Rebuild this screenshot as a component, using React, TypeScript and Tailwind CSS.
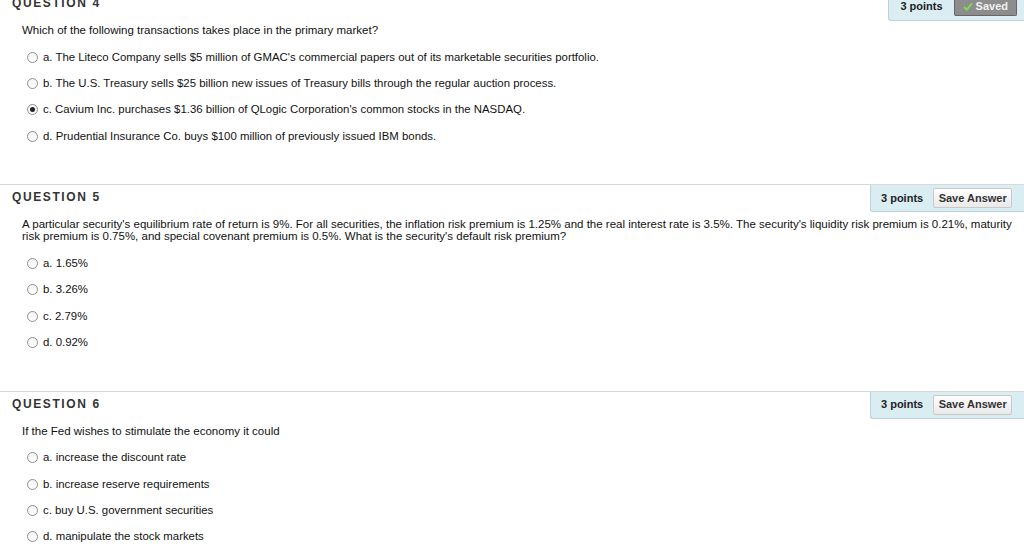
import type { ReactNode } from 'react'

type Question = {
  num: number
  text: ReactNode
  options: string[]
  selected?: number
  saved?: boolean
}

const QUESTIONS: Question[] = [
  {
    num: 4,
    text: 'Which of the following transactions takes place in the primary market?',
    options: [
      "a. The Liteco Company sells $5 million of GMAC's commercial papers out of its marketable securities portfolio.",
      'b. The U.S. Treasury sells $25 billion new issues of Treasury bills through the regular auction process.',
      "c. Cavium Inc. purchases $1.36 billion of QLogic Corporation's common stocks in the NASDAQ.",
      'd. Prudential Insurance Co. buys $100 million of previously issued IBM bonds.',
    ],
    selected: 2,
    saved: true,
  },
  {
    num: 5,
    text: (
      <>
        A particular security's equilibrium rate of return is 9%. For all securities, the inflation risk premium is 1.25% and the real interest rate is 3.5%. The security's liquidity risk premium is 0.21%, maturity
        <br />
        risk premium is 0.75%, and special covenant premium is 0.5%. What is the security's default risk premium?
      </>
    ),
    options: ['a. 1.65%', 'b. 3.26%', 'c. 2.79%', 'd. 0.92%'],
  },
  {
    num: 6,
    text: 'If the Fed wishes to stimulate the economy it could',
    options: [
      'a. increase the discount rate',
      'b. increase reserve requirements',
      'c. buy U.S. government securities',
      'd. manipulate the stock markets',
    ],
  },
]

function Radio({ checked }: { checked?: boolean }) {
  return (
    <span className="flex h-[11px] w-[11px] shrink-0 items-center justify-center rounded-full border border-[#8f8f8f] bg-gradient-to-b from-[#f4f4f4] to-white">
      {checked && <span className="h-[5px] w-[5px] rounded-full bg-[#222]" />}
    </span>
  )
}

function PointsBox({ saved }: { saved?: boolean }) {
  if (saved) {
    return (
      <div className="flex h-[30px] items-start gap-[11px] rounded-bl-[3px] border-b border-l border-[#b9d3dc] bg-[#d9edf3] pl-[11px] pr-[7px]">
        <span className="pt-[9px] text-[11px] font-bold leading-[13px] text-[#222]">3 points</span>
        <span className="flex h-[25px] items-end gap-[3px] rounded-b-[2px] border border-t-0 border-[#666] bg-[#8d8d8d] px-[8px] pb-[2px] text-[11px] font-bold leading-[13px] text-[#f0f0f0]">
          <svg width="10" height="9" viewBox="0 0 10 9" className="mb-[2px]">
            <path d="M1 5 L3.8 7.6 L9 1.4" fill="none" stroke="#7ed957" strokeWidth="2" />
          </svg>
          Saved
        </span>
      </div>
    )
  }
  return (
    <div className="flex h-[27px] w-[154px] items-center gap-[10px] rounded-bl-[3px] border-b border-l border-[#b9d3dc] bg-[#d9edf3] pl-[10px] pr-[11px]">
      <span className="text-[11px] font-bold text-[#222]">3 points</span>
      <button
        type="button"
        className="h-[20px] w-[79px] rounded-[2px] border border-[#c9c9c9] bg-gradient-to-b from-white to-[#e9e9e9] text-[11px] font-bold text-[#333]"
      >
        Save Answer
      </button>
    </div>
  )
}

function QuestionBlock({ q }: { q: Question }) {
  return (
    <div className="border-t border-[#d8d8d8]">
      <div className="flex h-[26px] items-start justify-between">
        <h2 className="pl-[12px] pt-[5px] text-[12px] font-bold leading-[14px] tracking-[1.6px] text-[#333]">
          QUESTION {q.num}
        </h2>
        <PointsBox saved={q.saved} />
      </div>
      <div className="pl-[22px] pr-[12px] pt-[7px] pb-[35px]">
        <p className="text-[11.5px] leading-[12px] text-[#111]">{q.text}</p>
        <div className="mt-[8px] flex flex-col">
          {q.options.map((opt, i) => (
            <label key={opt} className="flex h-[26.33px] items-center gap-[5px] pl-[5px] text-[11.4px] text-[#111]">
              <Radio checked={q.selected === i} />
              <span>{opt}</span>
            </label>
          ))}
        </div>
      </div>
    </div>
  )
}

export default function App() {
  return (
    <div className="h-[548px] w-[1024px] overflow-hidden bg-white font-['Liberation_Sans',Arial,sans-serif]">
      <div className="-mt-[10px]">
        {QUESTIONS.map((q) => (
          <QuestionBlock key={q.num} q={q} />
        ))}
      </div>
    </div>
  )
}
